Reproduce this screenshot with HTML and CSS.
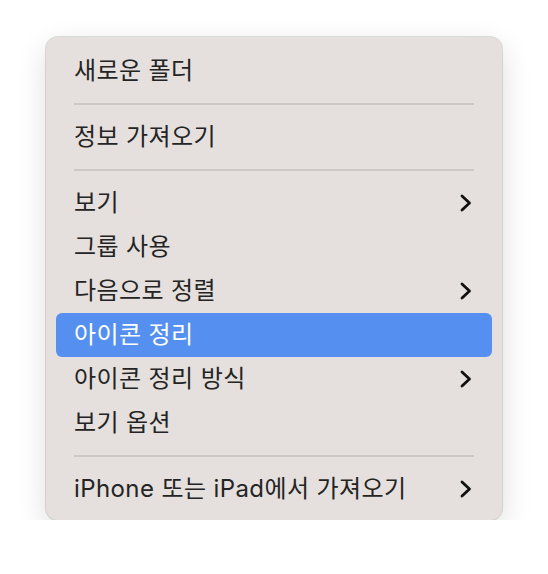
FILE: index.html
```html
<!DOCTYPE html>
<html lang="ko">
<head>
  <meta charset="UTF-8">
  <title>컨텍스트 메뉴</title>
  <link rel="stylesheet" href="styles.css">
</head>
<body>
  <div class="menu">
    <div class="item">새로운 폴더</div>
    <div class="sep"></div>
    <div class="item">정보 가져오기</div>
    <div class="sep"></div>
    <div class="item">보기
      <svg class="chev" viewBox="0 0 12 18"><path d="M2 2 L9.5 9 L2 16"/></svg>
    </div>
    <div class="item">그룹 사용</div>
    <div class="item">다음으로 정렬
      <svg class="chev" viewBox="0 0 12 18"><path d="M2 2 L9.5 9 L2 16"/></svg>
    </div>
    <div class="item active">아이콘 정리</div>
    <div class="item">아이콘 정리 방식
      <svg class="chev" viewBox="0 0 12 18"><path d="M2 2 L9.5 9 L2 16"/></svg>
    </div>
    <div class="item">보기 옵션</div>
    <div class="sep"></div>
    <div class="item">iPhone 또는 iPad에서 가져오기
      <svg class="chev" viewBox="0 0 12 18"><path d="M2 2 L9.5 9 L2 16"/></svg>
    </div>
  </div>
</body>
</html>
```

FILE: styles.css
```css
body {
  margin: 0;
  padding: 37px 0 0 46px;
  background-color: #fff;
  font-family: Inter, "Noto Sans CJK KR", sans-serif;
  color: #242424;
}
.menu {
  width: 456px;
  box-sizing: border-box;
  padding: 12px 10px 9px;
  background-color: #e5e0dd;
  border-radius: 12px;
  box-shadow: 0 0 0 1px rgba(0, 0, 0, 0.12), 0 10px 30px rgba(0, 0, 0, 0.14);
}
.item {
  height: 44px;
  padding: 0 20px 0 18px;
  display: flex;
  align-items: center;
  justify-content: space-between;
  font-size: 24px;
  letter-spacing: 0.4px;
  line-height: 1;
  border-radius: 6px;
}
.item.active {
  background-color: #5590f1;
  color: #fff;
}
.sep {
  height: 2px;
  margin: 10px 18px;
  background-color: #cdc8c5;
}
.chev {
  width: 12px;
  height: 18px;
}
.chev path {
  fill: none;
  stroke: #111;
  stroke-width: 2.8;
  stroke-linecap: round;
  stroke-linejoin: round;
}
```
